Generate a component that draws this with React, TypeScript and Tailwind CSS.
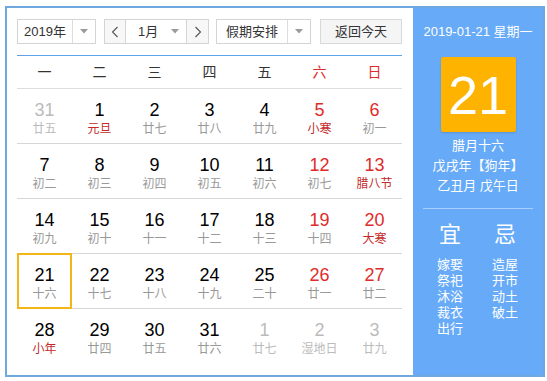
import React from "react";

const FONT = { fontFamily: '"Liberation Sans", Arial, "Noto Sans CJK SC", sans-serif' };

type Cell = { d: string; l: string; num?: string; lun?: string; today?: boolean };

const GRAY = "text-[#bbbbbb]";
const BLACK = "text-[#000000]";
const RED = "text-[#e02b2b]";
const LGRAY = "text-[#999999]";
const FRED = "text-[#c42a2a]";

const rows: Cell[][] = [
  [
    { d: "31", l: "廿五", num: GRAY, lun: GRAY },
    { d: "1", l: "元旦", lun: FRED },
    { d: "2", l: "廿七" },
    { d: "3", l: "廿八" },
    { d: "4", l: "廿九" },
    { d: "5", l: "小寒", num: RED, lun: FRED },
    { d: "6", l: "初一", num: RED },
  ],
  [
    { d: "7", l: "初二" },
    { d: "8", l: "初三" },
    { d: "9", l: "初四" },
    { d: "10", l: "初五" },
    { d: "11", l: "初六" },
    { d: "12", l: "初七", num: RED },
    { d: "13", l: "腊八节", num: RED, lun: FRED },
  ],
  [
    { d: "14", l: "初九" },
    { d: "15", l: "初十" },
    { d: "16", l: "十一" },
    { d: "17", l: "十二" },
    { d: "18", l: "十三" },
    { d: "19", l: "十四", num: RED },
    { d: "20", l: "大寒", num: RED, lun: FRED },
  ],
  [
    { d: "21", l: "十六", today: true },
    { d: "22", l: "十七" },
    { d: "23", l: "十八" },
    { d: "24", l: "十九" },
    { d: "25", l: "二十" },
    { d: "26", l: "廿一", num: RED },
    { d: "27", l: "廿二", num: RED },
  ],
  [
    { d: "28", l: "小年", lun: FRED },
    { d: "29", l: "廿四" },
    { d: "30", l: "廿五" },
    { d: "31", l: "廿六" },
    { d: "1", l: "廿七", num: GRAY, lun: GRAY },
    { d: "2", l: "湿地日", num: GRAY, lun: GRAY },
    { d: "3", l: "廿九", num: GRAY, lun: GRAY },
  ],
];

const Caret = () => (
  <svg width="8" height="5" viewBox="0 0 8 5">
    <path d="M0 0 L8 0 L4 4.5 Z" fill="#9a9a9a" />
  </svg>
);

const Chevron = ({ dir }: { dir: "l" | "r" }) => (
  <svg width="8" height="12" viewBox="0 0 8 12">
    <polyline
      points={dir === "l" ? "6.5,1 1.5,6 6.5,11" : "1.5,1 6.5,6 1.5,11"}
      fill="none"
      stroke="#555"
      strokeWidth="1.1"
    />
  </svg>
);

export default function App() {
  const weekdays = ["一", "二", "三", "四", "五", "六", "日"];
  return (
    <div className="w-[547px] h-[381px] bg-white" style={FONT}>
      <div className="ml-[5px] mt-[6px] w-[540px] h-[371px] border-2 border-[#6ea8de] flex">
        {/* left */}
        <div className="w-[406px] pl-[10px] pt-[11px]">
          <div className="flex items-center h-[25px] text-[13px] text-[#333]">
            <div className="w-[79px] h-[25px] border border-[#d4d4d4] flex bg-white">
              <div className="w-[54px] flex items-center justify-center">2019年</div>
              <div className="flex-1 border-l border-[#dcdcdc] flex items-center justify-center">
                <Caret />
              </div>
            </div>
            <div className="ml-[8px] w-[105px] h-[25px] border border-[#d4d4d4] flex bg-white">
              <div className="w-[21px] flex items-center justify-center border-r border-[#d4d4d4] bg-[#f7f7f7]">
                <Chevron dir="l" />
              </div>
              <div className="w-[60px] flex items-center">
                <span className="ml-[12px] w-[30px]">1月</span>
                <span className="ml-[3px] flex items-center">
                  <Caret />
                </span>
              </div>
              <div className="flex-1 flex items-center justify-center border-l border-[#d4d4d4] bg-[#f7f7f7]">
                <Chevron dir="r" />
              </div>
            </div>
            <div className="ml-[7px] w-[95px] h-[25px] border border-[#d4d4d4] flex bg-white">
              <div className="w-[70px] flex items-center justify-center">假期安排</div>
              <div className="flex-1 border-l border-[#dcdcdc] flex items-center justify-center">
                <Caret />
              </div>
            </div>
            <div className="ml-[9px] w-[82px] h-[25px] border border-[#d9d9d9] bg-[#f5f5f5] flex items-center justify-center">
              返回今天
            </div>
          </div>

          <div className="mt-[11px] w-[385px] h-[1px] bg-[#5ea3e6]" />

          <div className="w-[385px]">
            <div className="grid grid-cols-7 h-[33px] border-b border-[#dddddd] text-[14px]">
              {weekdays.map((w, i) => (
                <div
                  key={w}
                  className={`flex items-center justify-center ${i >= 5 ? "text-[#e02b2b]" : "text-[#333]"}`}
                >
                  {w}
                </div>
              ))}
            </div>
            {rows.map((r, ri) => (
              <div
                key={ri}
                className={`grid grid-cols-7 h-[55px] ${ri < rows.length - 1 ? "border-b border-[#d6d6d6]" : ""}`}
              >
                {r.map((c, ci) => (
                  <div key={ci} className="relative flex flex-col items-center pt-[10px]">
                    {c.today && (
                      <div className="absolute left-0 right-0 top-[-1px] bottom-[-1px] border-2 border-[#f4b517]" />
                    )}
                    <div className={`h-[22px] leading-[22px] text-[18px] ${c.num ?? BLACK}`}>{c.d}</div>
                    <div className={`h-[16px] leading-[16px] text-[12px] ${c.lun ?? LGRAY}`}>{c.l}</div>
                  </div>
                ))}
              </div>
            ))}
          </div>
        </div>

        {/* right panel */}
        <div className="w-[130px] bg-[#66aaf8] text-white flex flex-col items-center">
          <div className="mt-[14px] h-[20px] leading-[20px] text-[13px]">2019-01-21 星期一</div>
          <div className="mt-[15px] w-[75px] h-[75px] bg-[#fdb300] rounded-[2px] flex items-center justify-center text-[54px] leading-none shadow-[0_1px_2px_rgba(0,0,0,0.15)]">
            21
          </div>
          <div className="mt-[4px] text-[13px] leading-[20px] text-center">
            <div>腊月十六</div>
            <div>戊戌年【狗年】</div>
            <div>乙丑月 戊午日</div>
          </div>
          <div className="mt-[12px] w-[110px] h-[1px] bg-[#a9cefb]" />
          <div className="mt-[12px] w-full pl-[14px] flex gap-[9px]">
            <div className="w-[46px] flex flex-col items-center">
              <div className="h-[28px] leading-[28px] text-[22px]">宜</div>
              <div className="mt-[8px] text-[13px] leading-[16px] flex flex-col items-center">
                <span>嫁娶</span>
                <span>祭祀</span>
                <span>沐浴</span>
                <span>裁衣</span>
                <span>出行</span>
              </div>
            </div>
            <div className="w-[46px] flex flex-col items-center">
              <div className="h-[28px] leading-[28px] text-[22px]">忌</div>
              <div className="mt-[8px] text-[13px] leading-[16px] flex flex-col items-center">
                <span>造屋</span>
                <span>开市</span>
                <span>动土</span>
                <span>破土</span>
              </div>
            </div>
          </div>
        </div>
      </div>
    </div>
  );
}
